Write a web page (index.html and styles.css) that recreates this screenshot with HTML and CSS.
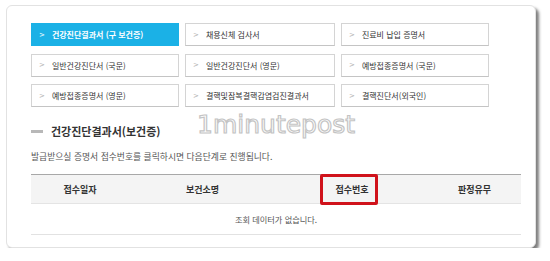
FILE: index.html
```html
<!DOCTYPE html>
<html lang="ko">
<head>
<meta charset="utf-8">
<link rel="stylesheet" href="styles.css">
</head>
<body>
<div class="card">
  <div class="tabs">
    <a class="tab active"><span class="chev">&gt;</span>건강진단결과서 (구 보건증)</a>
    <a class="tab"><span class="chev">&gt;</span>채용신체 검사서</a>
    <a class="tab"><span class="chev">&gt;</span>진료비 납입 증명서</a>
    <a class="tab"><span class="chev">&gt;</span>일반건강진단서 (국문)</a>
    <a class="tab"><span class="chev">&gt;</span>일반건강진단서 (영문)</a>
    <a class="tab"><span class="chev">&gt;</span>예방접종증명서 (국문)</a>
    <a class="tab"><span class="chev">&gt;</span>예방접종증명서 (영문)</a>
    <a class="tab"><span class="chev">&gt;</span>결핵및잠복결핵감염검진결과서</a>
    <a class="tab"><span class="chev">&gt;</span>결핵진단서(외국인)</a>
  </div>
  <h2 class="title"><span class="bar"></span>건강진단결과서(보건증)</h2>
  <p class="desc">발급받으실 증명서 접수번호를 클릭하시면 다음단계로 진행됩니다.</p>
  <table class="list">
    <colgroup>
      <col class="c1"><col class="c2"><col class="c3"><col class="c4">
    </colgroup>
    <thead>
      <tr>
        <th>접수일자</th>
        <th>보건소명</th>
        <th class="mark">접수번호<span class="redbox"></span></th>
        <th>판정유무</th>
      </tr>
    </thead>
    <tbody>
      <tr><td colspan="4">조회 데이터가 없습니다.</td></tr>
    </tbody>
  </table>
  <div class="watermark">1minutepost</div>
</div>
</body>
</html>
```

FILE: styles.css
```css
html, body {
  margin: 0;
  padding: 0;
  background: #ffffff;
}
body {
  font-family: "Noto Sans CJK KR", "Noto Sans", sans-serif;
  color: #333;
}
.card {
  position: relative;
  box-sizing: border-box;
  margin: 5px 0 0 6px;
  width: 530px;
  height: 243px;
  padding: 17px 0 0 24px;
  background: #fff;
  border: 1px solid #e2e2e2;
  border-radius: 6px;
  box-shadow: 3px 3px 3px rgba(0,0,0,0.5);
}
.tabs {
  display: grid;
  grid-template-columns: 148px 150px 148px;
  grid-auto-rows: 23px;
  column-gap: 6px;
  row-gap: 7.5px;
}
.tab {
  display: flex;
  align-items: center;
  box-sizing: border-box;
  border: 1px solid #d4d4d4;
  border-bottom-color: #c4c4c4;
  background: #fff;
  font-size: 8px;
  color: #333;
  padding-left: 7px;
  white-space: nowrap;
}
.chev {
  color: #b0b0b0;
  font-family: "DejaVu Sans", sans-serif;
  font-size: 7px;
  margin-right: 7px;
}
.tab.active {
  background: #1bb1e6;
  border-color: #1bb1e6;
  color: #fff;
  font-weight: bold;
}
.tab.active .chev {
  color: #d8f2fc;
}
.title {
  display: flex;
  align-items: center;
  margin: 16px 0 0 0;
  height: 16px;
  font-size: 11px;
  font-weight: bold;
  color: #333;
}
.bar {
  display: block;
  width: 12px;
  height: 3px;
  background: #b8b8b8;
  margin-right: 8px;
}
.desc {
  margin: 12px 0 0 0;
  font-size: 8.8px;
  line-height: 12px;
  color: #555;
}
.list {
  margin-top: 11px;
  width: 490px;
  border-collapse: collapse;
  table-layout: fixed;
}
.c1 { width: 98px; }
.c2 { width: 147px; }
.c3 { width: 152px; }
.c4 { width: 93px; }
.list th {
  height: 28px;
  padding: 0;
  background: #f4f4f4;
  border-top: 1px solid #a8a8a8;
  border-bottom: 1px solid #e4e4e4;
  font-size: 9px;
  font-weight: bold;
  color: #333;
  text-align: center;
}
.list th.mark {
  position: relative;
}
.redbox {
  position: absolute;
  left: 44px;
  top: -1px;
  width: 58px;
  height: 31px;
  box-sizing: border-box;
  border: 3px solid #d0121b;
  border-radius: 2px;
}
.list td {
  height: 30px;
  padding: 0;
  border-bottom: 1px solid #e2e2e2;
  font-size: 8.2px;
  color: #555;
  text-align: center;
}
.watermark {
  position: absolute;
  left: 190px;
  top: 104px;
  font-family: "DejaVu Sans", sans-serif;
  font-size: 25px;
  color: #fff;
  -webkit-text-stroke: 1.2px #c4c4c4;
}
```
